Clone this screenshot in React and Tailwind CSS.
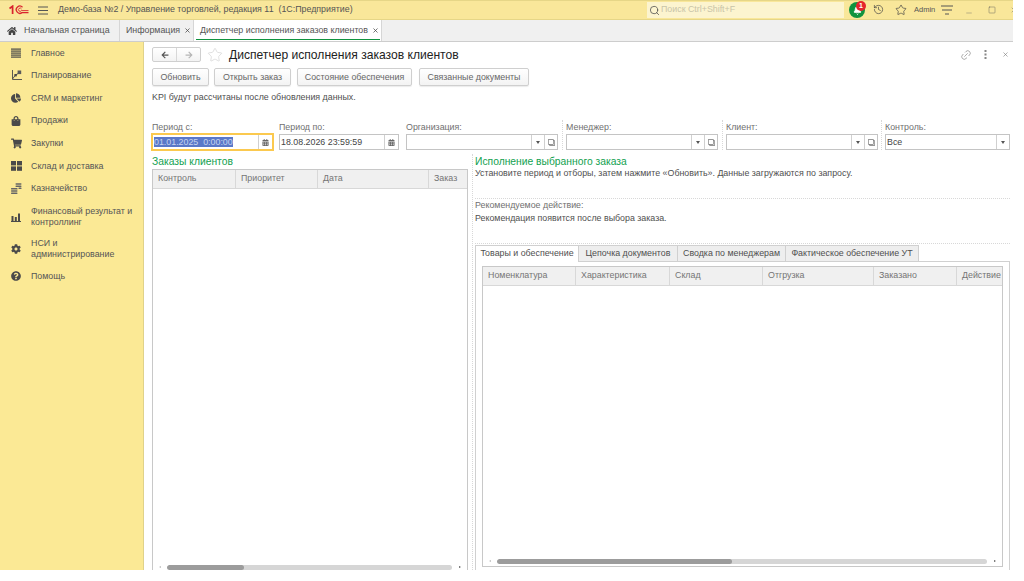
import React from 'react';
import { X, Minus, Square, Star, History, Search, Bell, Link2 } from 'lucide-react';
import { FaHome, FaArrowLeft, FaArrowRight, FaCalendarAlt, FaShoppingCart, FaShoppingBag, FaChartPie, FaCog, FaQuestionCircle, FaRegClone } from 'react-icons/fa';

const MainIcon = () => (
  <svg width="10" height="10" viewBox="0 0 10 10" fill="#4a4a4a">
    <rect x="0" y="0.5" width="10" height="1.2" />
    <rect x="0" y="2.5" width="10" height="1.2" />
    <rect x="0" y="4.5" width="10" height="1.2" />
    <rect x="0" y="6.5" width="10" height="1.2" />
    <rect x="0" y="8.5" width="10" height="1.2" />
  </svg>
);

const PlanIcon = () => (
  <svg width="11" height="11" viewBox="0 0 11 11" fill="none" stroke="#4a4a4a">
    <path d="M1.5 0 V9.5 H11" strokeWidth="0.9" />
    <path d="M1.5 9 L4.5 5 L8 3" strokeWidth="0.9" />
    <rect x="3.4" y="4" width="2.4" height="2.4" fill="#4a4a4a" stroke="none" />
    <rect x="6.6" y="0.5" width="3.6" height="3.6" fill="#5a5a5a" stroke="none" />
  </svg>
);

const GridIcon = () => (
  <svg width="11" height="10" viewBox="0 0 11 10" fill="#4a4a4a">
    <rect x="0" y="0" width="5" height="4.4" />
    <rect x="6" y="0" width="5" height="4.4" />
    <rect x="0" y="5.4" width="5" height="4.4" />
    <rect x="6" y="5.4" width="5" height="4.4" />
  </svg>
);

const MoneyIcon = () => (
  <svg width="11" height="11" viewBox="0 0 11 11" fill="#666">
    <rect x="0" y="5" width="6.5" height="1.5" rx="0.6" />
    <rect x="0" y="7.2" width="6.5" height="1.5" rx="0.6" />
    <rect x="0" y="9.4" width="6.5" height="1.5" rx="0.6" />
    <rect x="4.5" y="0.2" width="6" height="1.5" rx="0.6" />
    <rect x="4.5" y="2.4" width="6" height="1.5" rx="0.6" />
    <rect x="7.5" y="4.6" width="3" height="1.5" rx="0.6" />
  </svg>
);

const BarsIcon = () => (
  <svg width="10" height="10" viewBox="0 0 10 10" fill="#4a4a4a">
    <rect x="0.5" y="4" width="2" height="5.2" />
    <rect x="3.8" y="5" width="2" height="4.2" />
    <rect x="7" y="1.5" width="2" height="7.7" />
    <rect x="0" y="9" width="10" height="1" />
  </svg>
);

const navItems = [
  { label: ['Главное'], icon: <MainIcon />, h: 'h-[22px]' },
  { label: ['Планирование'], icon: <PlanIcon />, h: 'h-[23px]' },
  { label: ['CRM и маркетинг'], icon: <FaChartPie size={10} color="#4a4a4a" />, h: 'h-[22px]' },
  { label: ['Продажи'], icon: <FaShoppingBag size={10} color="#4a4a4a" />, h: 'h-[23px]' },
  { label: ['Закупки'], icon: <FaShoppingCart size={11} color="#4a4a4a" />, h: 'h-[23px]' },
  { label: ['Склад и доставка'], icon: <GridIcon />, h: 'h-[22px]' },
  { label: ['Казначейство'], icon: <MoneyIcon />, h: 'h-[23px]' },
  { label: ['Финансовый результат и', 'контроллинг'], icon: <BarsIcon />, h: 'h-[33px]' },
  { label: ['НСИ и', 'администрирование'], icon: <FaCog size={10} color="#4a4a4a" />, h: 'h-[32px]' },
  { label: ['Помощь'], icon: <FaQuestionCircle size={10} color="#4a4a4a" />, h: 'h-[22px]' },
];

const Field = ({ label, value, w, picker, calendar, active }) => (
  <div className={`flex flex-col shrink-0 ${w}`}>
    <div className="h-[14px] text-[8.85px] leading-[14px] text-[#707070]">{label}</div>
    <div className={`h-[16px] flex items-center bg-white ${active ? 'outline-2 outline-[#fbc94f] -outline-offset-1 border border-transparent' : 'border border-[#c4c4c4]'}`}>
      <div className="flex-1 min-w-0 text-[8.85px] leading-[12px] text-[#444] pl-[1px] whitespace-pre">
        {active ? <span className="bg-[#5a78c8] text-[#c8d4ee]">{value}</span> : value}
      </div>
      {calendar && (
        <div className="w-[14px] h-full border-l border-[#d0d0d0] flex items-center justify-center">
          <FaCalendarAlt size={7} color="#666" />
        </div>
      )}
      {picker && (
        <div className="w-[13px] h-full border-l border-[#d0d0d0] flex items-center justify-center">
          <div className="w-0 h-0 border-l-[2px] border-r-[2px] border-t-[3px] border-l-transparent border-r-transparent border-t-[#555]" />
        </div>
      )}
      {picker === 'open' && (
        <div className="w-[13px] h-full border-l border-[#d0d0d0] flex items-center justify-center">
          <FaRegClone size={7} color="#777" className="-scale-x-100" />
        </div>
      )}
    </div>
  </div>
);

const FieldGap = ({ w, dots }) => (
  <div className={`${w} shrink-0 flex justify-center`}>
    {dots && <div className="h-full border-l border-dotted border-[#d8d8d8]" />}
  </div>
);

const Btn = ({ children, w }) => (
  <div className={`h-[18px] ${w} flex items-center justify-center pt-[1px] whitespace-nowrap bg-gradient-to-b from-white to-[#f3f3f3] border border-[#cfcfcf] rounded-[2px] text-[8.85px] text-[#666] shadow-[0_1px_1px_rgba(0,0,0,0.08)]`}>
    {children}
  </div>
);

const HeadCell = ({ children, w, last }) => (
  <div className={`h-full flex items-center pl-[5px] text-[8.85px] text-[#757575] whitespace-nowrap overflow-hidden ${w} ${last ? '' : 'border-r border-[#d8d8d8]'}`}>
    {children}
  </div>
);

const Scroll = ({ thumb, className }) => (
  <div className={`h-[6px] flex items-center ${className}`}>
    <div className="w-[14px] flex justify-center">
      <div className="w-0 h-0 border-y-[1.5px] border-r-[2px] border-y-transparent border-r-[#bbb]" />
    </div>
    <div className="flex-1 h-[5px] rounded-full bg-[#d6d6d6] overflow-hidden">
      <div className={`h-full rounded-full bg-[#9c9c9c] ${thumb}`} />
    </div>
    <div className="w-[15px] flex justify-center">
      <div className="w-0 h-0 border-y-[1.5px] border-l-[2px] border-y-transparent border-l-[#555]" />
    </div>
  </div>
);

const DetailTab = ({ children, w, active }) => (
  <div className={`${w} flex items-center justify-center whitespace-nowrap border-t border-r border-[#d0d0d0] ${active ? 'h-[17px] bg-white border-l' : 'h-[16px] bg-[#eeeeee]'}`}>
    {children}
  </div>
);

const App = () => (
  <div className="w-[1024px] h-[581px] bg-white overflow-hidden font-['Liberation_Sans',Arial,sans-serif]">
    <div className="w-[1013px] h-[570px] flex flex-col bg-white">
      {/* top bar */}
      <div className="h-[20px] shrink-0 bg-[#f9e79a] border-t border-b border-[#e6d687] flex items-center relative overflow-hidden">
        <svg width="20" height="10" viewBox="0 0 20 10" className="ml-[9px]">
          <path d="M0.5 3.5 L3.6 1.2 V9" fill="none" stroke="#d9232e" strokeWidth="1.7" />
          <path d="M13.5 2.2 A3.6 3.6 0 1 0 13 7.6 H19.5" fill="none" stroke="#d9232e" strokeWidth="1.3" />
          <path d="M12.5 4 A1.6 1.6 0 1 0 12.4 5.6 H19.5" fill="none" stroke="#d9232e" strokeWidth="0.9" />
        </svg>
        <svg width="10" height="9" viewBox="0 0 10 9" className="ml-[9px]" stroke="#555" strokeWidth="1">
          <path d="M0 1 H10 M0 4.5 H10 M0 8 H10" />
        </svg>
        <span className="ml-[10px] text-[8.85px] text-[#555] whitespace-pre">Демо-база №2 / Управление торговлей, редакция 11  (1С:Предприятие)</span>
        <div className="absolute left-[647px] top-[1px] w-[197px] h-[16px] bg-[#fcf4cf] flex items-center pl-[2px] text-[8.85px] text-[#c9c4a8]">
          <Search size={11} strokeWidth={1.6} className="text-[#444] mr-[1px]" />
          Поиск Ctrl+Shift+F
        </div>
        <div className="absolute left-[849px] top-[1px] w-[16px] h-[16px] rounded-full bg-[#10933f] flex items-center justify-center">
          <Bell size={9} fill="#fff" className="text-white" />
        </div>
        <div className="absolute left-[856px] top-0 w-[10px] h-[10px] rounded-full bg-[#e5252c] text-white text-[7px] font-bold leading-[10px] text-center">1</div>
        <History size={11} strokeWidth={1.5} className="absolute left-[873px] top-[3px] text-[#444]" />
        <Star size={12} strokeWidth={1.4} className="absolute left-[895px] top-[3px] text-[#444]" />
        <span className="absolute left-[914px] top-[3px] text-[7.5px] leading-[12px] text-[#555]">Admin</span>
        <svg width="12" height="10" viewBox="0 0 12 10" className="absolute left-[941px] top-[4px]" stroke="#555" strokeWidth="1">
          <path d="M0 1 H12 M1 5 H11 M4 9 H8" />
        </svg>
        <Minus size={8} strokeWidth={1.3} className="absolute left-[965px] top-[8px] text-[#666]" />
        <Square size={8} strokeWidth={1.3} className="absolute left-[988px] top-[5px] text-[#555]" />
        <X size={8} strokeWidth={1.3} className="absolute left-[1010px] top-[5px] text-[#555]" />
      </div>

      {/* tabs */}
      <div className="h-[22px] shrink-0 bg-[#f0f0f0] border-b border-[#cdcdcd] flex items-stretch text-[8.85px] text-[#555] whitespace-nowrap">
        <div className="w-[120px] flex items-center border-r border-[#d6d6d6] pl-[7px]">
          <FaHome size={10} color="#444" className="mr-[7px]" />
          Начальная страница
        </div>
        <div className="w-[74px] flex items-center border-r border-[#d6d6d6] pl-[6px]">
          Информация
          <X size={7} strokeWidth={2.5} className="ml-[4px] text-[#444]" />
        </div>
        <div className="w-[188px] flex items-center bg-white border-r border-[#d6d6d6] pl-[6px] relative">
          Диспетчер исполнения заказов клиентов
          <X size={7} strokeWidth={2.5} className="ml-[4px] text-[#444]" />
          <div className="absolute left-[2px] right-[1px] bottom-[1px] h-[1px] bg-[#10933f]" />
        </div>
      </div>

      <div className="flex-1 min-h-0 flex">
        {/* sidebar */}
        <div className="w-[144px] shrink-0 bg-[#fbe995] border-r border-[#e0d28a]">
          {navItems.map((it) => (
            <div key={it.label[0]} className={`${it.h} flex items-center text-[8.85px] leading-[11px] text-[#555]`}>
              <div className="w-[31px] flex justify-center pl-[1px] shrink-0">
                {it.icon}
              </div>
              <div>
                {it.label.map((l) => <div key={l} className="whitespace-nowrap">{l}</div>)}
              </div>
            </div>
          ))}
        </div>

        {/* main */}
        <div className="flex-1 min-w-0 flex flex-col pl-[8px] pr-[3px] pt-[5px]">
          <div className="flex items-center h-[15px] shrink-0">
            <div className="w-[49px] h-[15px] flex border border-[#cfcfcf] rounded-[2px] bg-gradient-to-b from-white to-[#f3f3f3]">
              <div className="flex-1 flex items-center justify-center border-r border-[#d8d8d8]">
                <FaArrowLeft size={8} color="#555" />
              </div>
              <div className="flex-1 flex items-center justify-center">
                <FaArrowRight size={8} color="#b5b5b5" />
              </div>
            </div>
            <Star size={16} strokeWidth={1} className="ml-[6px] text-[#d0d0d0]" />
            <div className="ml-[6px] pt-[2px] text-[12.1px] leading-[15px] text-[#222] whitespace-nowrap">Диспетчер исполнения заказов клиентов</div>
            <div className="ml-auto flex items-center">
              <Link2 size={12} strokeWidth={1.3} className="text-[#888] -rotate-45" />
              <svg width="3" height="9" viewBox="0 0 3 9" fill="#888" className="ml-[12px]">
                <rect x="0.5" y="0" width="2" height="2" />
                <rect x="0.5" y="3.5" width="2" height="2" />
                <rect x="0.5" y="7" width="2" height="2" />
              </svg>
              <X size={7} strokeWidth={2} className="ml-[15px] mr-[1px] text-[#777]" />
            </div>
          </div>

          <div className="flex mt-[6px] shrink-0">
            <Btn w="w-[57px]">Обновить</Btn>
            <div className="w-[5px]" />
            <Btn w="w-[77px]">Открыть заказ</Btn>
            <div className="w-[6px]" />
            <Btn w="w-[115px]">Состояние обеспечения</Btn>
            <div className="w-[7px]" />
            <Btn w="w-[110px]">Связанные документы</Btn>
          </div>

          <div className="h-[14px] mt-[4px] text-[8.85px] leading-[14px] text-[#4f4f4f] shrink-0">KPI будут рассчитаны после обновления данных.</div>

          <div className="flex mt-[16px] shrink-0">
            <Field label="Период с:" value="01.01.2025  0:00:00" w="w-[121px]" calendar active />
            <FieldGap w="w-[6px]" />
            <Field label="Период по:" value="18.08.2026 23:59:59" w="w-[120px]" calendar />
            <FieldGap w="w-[7px]" />
            <Field label="Организация:" value="" w="w-[152px]" picker="open" />
            <FieldGap w="w-[8px]" dots />
            <Field label="Менеджер:" value="" w="w-[152px]" picker="open" />
            <FieldGap w="w-[8px]" dots />
            <Field label="Клиент:" value="" w="w-[152px]" picker="open" />
            <FieldGap w="w-[7px]" dots />
            <Field label="Контроль:" value="Все" w="w-[125px]" picker="drop" />
          </div>

          <div className="flex-1 min-h-0 flex mt-[4px]">
            {/* orders */}
            <div className="w-[316px] shrink-0 flex flex-col">
              <div className="h-[15px] text-[10.3px] leading-[16px] text-[#12a150]">Заказы клиентов</div>
              <div className="flex-1 min-h-0 border-x border-t border-[#c8c8c8] flex flex-col justify-between">
                <div className="h-[19px] flex bg-[#f0f0f0] border-b border-[#d8d8d8]">
                  <HeadCell w="w-[83px]">Контроль</HeadCell>
                  <HeadCell w="w-[82px]">Приоритет</HeadCell>
                  <HeadCell w="w-[111px]">Дата</HeadCell>
                  <HeadCell w="flex-1" last>Заказ</HeadCell>
                </div>
                <Scroll thumb="w-[27%]" />
              </div>
            </div>

            {/* details */}
            <div className="flex-1 min-w-0 flex flex-col ml-[4px] border-l border-dotted border-[#d8d8d8] pl-[2px]">
              <div className="h-[13px] text-[10.3px] leading-[16px] text-[#12a150] whitespace-nowrap">Исполнение выбранного заказа</div>
              <div className="h-[13px] text-[8.85px] leading-[13px] text-[#4f4f4f] whitespace-nowrap">Установите период и отборы, затем нажмите «Обновить». Данные загружаются по запросу.</div>
              <div className="h-[19px] border-b border-dotted border-[#d8d8d8]" />
              <div className="h-[13px] text-[8.85px] leading-[13px] text-[#707070] whitespace-nowrap">Рекомендуемое действие:</div>
              <div className="h-[13px] text-[8.85px] leading-[13px] text-[#4f4f4f] whitespace-nowrap">Рекомендация появится после выбора заказа.</div>
              <div className="h-[19px] border-b border-dotted border-[#d8d8d8]" />

              <div className="flex mt-[1px] h-[16px] text-[8.85px] text-[#4f4f4f] relative z-10">
                <DetailTab w="w-[104px]" active>Товары и обеспечение</DetailTab>
                <DetailTab w="w-[99px]">Цепочка документов</DetailTab>
                <DetailTab w="w-[108px]">Сводка по менеджерам</DetailTab>
                <DetailTab w="w-[133px]">Фактическое обеспечение УТ</DetailTab>
              </div>
              <div className="flex-1 min-h-0 border-x border-t border-[#d0d0d0] pt-[4px] px-[6px] pb-[3px]">
                <div className="h-full border border-[#c8c8c8] flex flex-col justify-between">
                  <div className="h-[19px] flex bg-[#f0f0f0] border-b border-[#d8d8d8]">
                    <HeadCell w="w-[93px]">Номенклатура</HeadCell>
                    <HeadCell w="w-[94px]">Характеристика</HeadCell>
                    <HeadCell w="w-[93px]">Склад</HeadCell>
                    <HeadCell w="w-[111px]">Отгрузка</HeadCell>
                    <HeadCell w="w-[83px]">Заказано</HeadCell>
                    <HeadCell w="flex-1" last>Действие</HeadCell>
                  </div>
                  <Scroll thumb="w-[48%]" className="mb-[2px]" />
                </div>
              </div>
            </div>
          </div>
        </div>
      </div>
    </div>
  </div>
);

export default App;
